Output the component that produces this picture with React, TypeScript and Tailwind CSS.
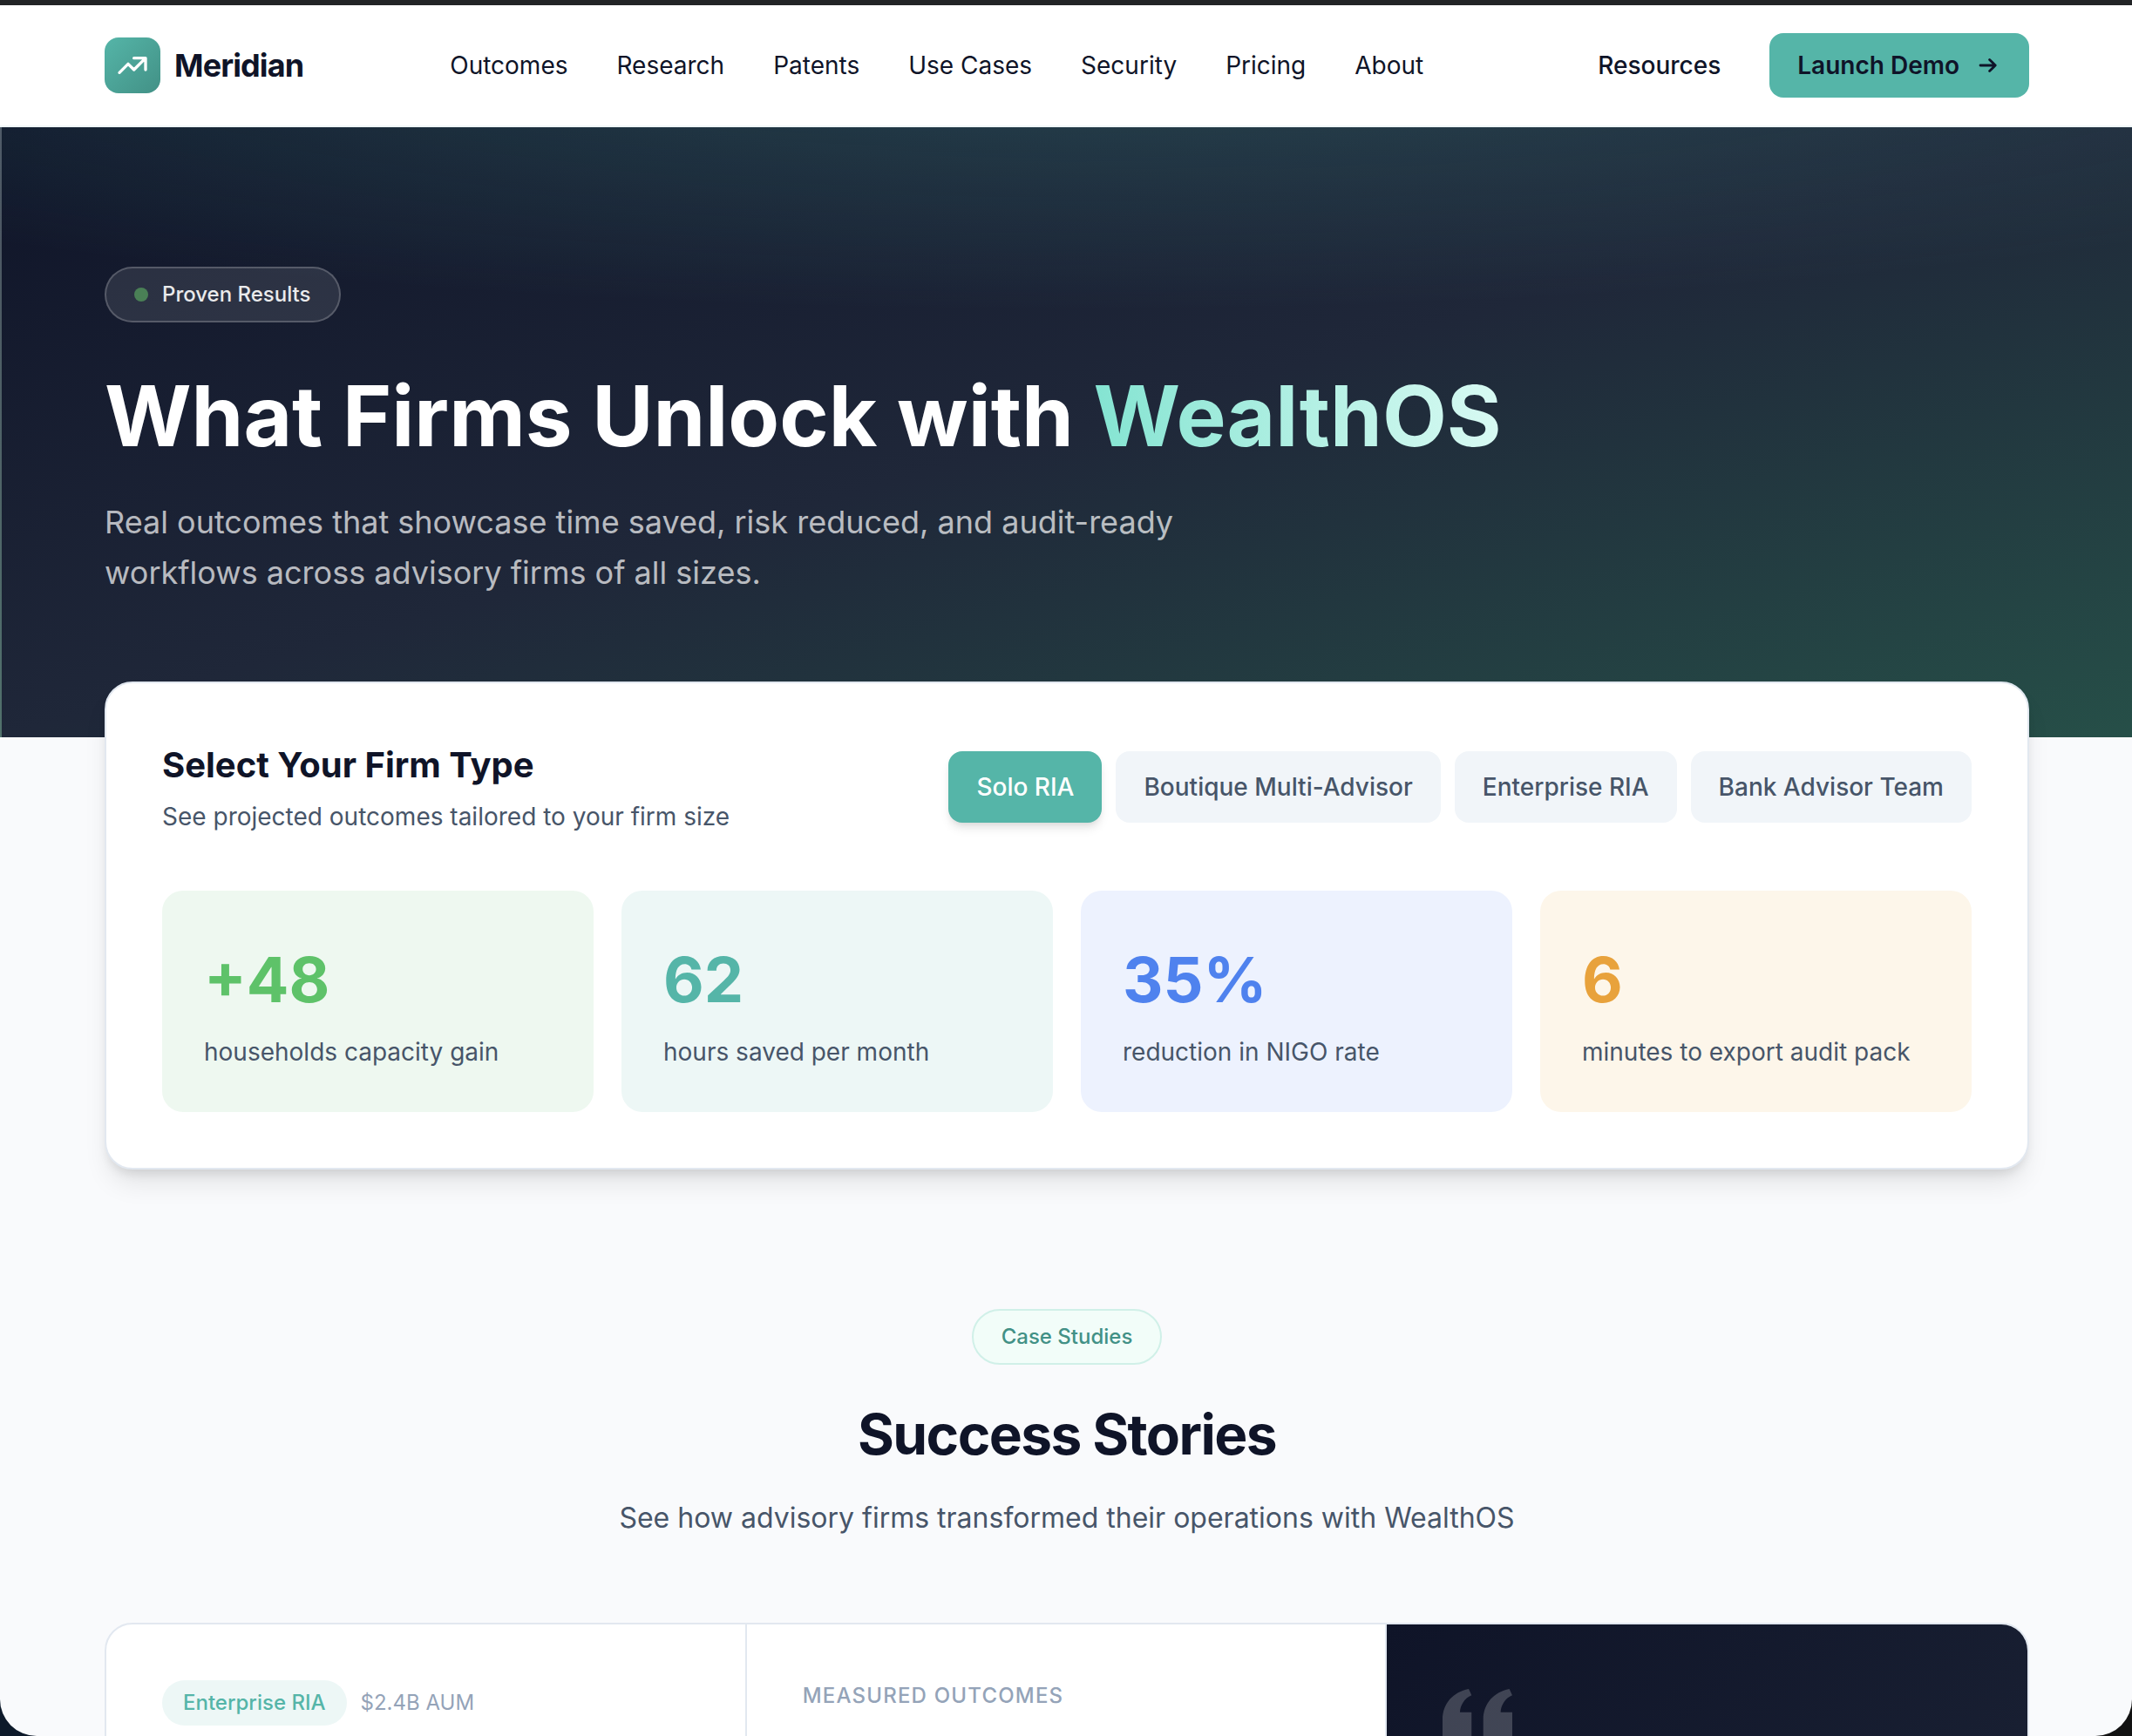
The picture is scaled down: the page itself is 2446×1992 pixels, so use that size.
import React, { useState } from "react";

const navLinks = ["Outcomes", "Research", "Patents", "Use Cases", "Security", "Pricing", "About"];

const firmTypes = ["Solo RIA", "Boutique Multi-Advisor", "Enterprise RIA", "Bank Advisor Team"];

const metrics = [
  { value: "+48", label: "households capacity gain", tile: "bg-[#eef8f0]", text: "text-[#5ec269]" },
  { value: "62", label: "hours saved per month", tile: "bg-[#edf7f6]", text: "text-[#55b5a8]" },
  { value: "35%", label: "reduction in NIGO rate", tile: "bg-[#edf2fe]", text: "text-[#4f82ee]" },
  { value: "6", label: "minutes to export audit pack", tile: "bg-[#fdf6ea]", text: "text-[#e8a23c]" },
];

function TrendIcon() {
  return (
    <svg viewBox="0 0 24 24" className="size-10" fill="none" stroke="currentColor" strokeWidth="2" strokeLinecap="round" strokeLinejoin="round" aria-hidden="true">
      <path d="M13 7h8m0 0v8m0-8l-8 8-4-4-6 6" />
    </svg>
  );
}

function ArrowIcon() {
  return (
    <svg viewBox="0 0 16 16" className="size-8" fill="none" stroke="currentColor" strokeWidth="1.4" strokeLinecap="round" strokeLinejoin="round" aria-hidden="true">
      <path d="M4 8h8.6M9.3 4.7 12.6 8 9.3 11.3" />
    </svg>
  );
}

function QuoteIcon() {
  return (
    <svg viewBox="0 0 24 24" className="size-20" fill="currentColor" aria-hidden="true">
      <path d="M14.017 21v-7.391c0-5.704 3.731-9.57 8.983-10.609l.995 2.151c-2.432.917-3.995 3.638-3.995 5.849h4v10h-9.983zm-14.017 0v-7.391c0-5.704 3.748-9.57 9-10.609l.996 2.151c-2.433.917-3.996 3.638-3.996 5.849h3.983v10h-9.983z" />
    </svg>
  );
}

function Header() {
  return (
    <header className="flex h-[140px] items-center justify-between border-b-2 border-[#eff6f8] bg-white pr-[118px] pl-[120px]">
      <a href="#" className="flex items-center gap-4">
        <span className="flex size-16 items-center justify-center rounded-2xl bg-linear-to-br from-[#55b5a8] to-[#429186] text-white">
          <TrendIcon />
        </span>
        <span className="text-[36px] leading-[54px] font-bold tracking-tight">Meridian</span>
      </a>
      <nav className="flex items-center gap-14 text-[28px] leading-[44px]">
        {navLinks.map((label) => (
          <a key={label} href="#">{label}</a>
        ))}
      </nav>
      <div className="flex items-center gap-6 text-[28px] leading-[44px]">
        <button type="button" className="px-8 font-medium">Resources</button>
        <button type="button" className="flex items-center gap-4 rounded-2xl bg-[#55b5a8] px-8 py-[15px] font-semibold">
          Launch Demo
          <ArrowIcon />
        </button>
      </div>
    </header>
  );
}

function Hero() {
  return (
    <section className="border-l-2 border-white/20 bg-[radial-gradient(ellipse_80%_50%_at_50%_-20%,rgba(85,181,168,0.3),transparent),linear-gradient(to_bottom_right,#0f1428_0%,#1f2739_50%,#264f48_100%)] px-[118px] py-40">
      <p className="inline-flex items-center gap-4 rounded-full border-2 border-white/20 bg-white/10 px-8 py-3 text-[24px] leading-[36px] font-medium text-white/90">
        <span className="size-4 rounded-full bg-[#4a8056]" />
        Proven Results
      </p>
      <h1 className="mt-12 text-[96px] leading-[118px] font-bold text-white">
        What Firms Unlock with{" "}
        <span className="bg-linear-to-r from-[#84e4d2] to-[#d8faf3] bg-clip-text text-transparent">WealthOS</span>
      </h1>
      <p className="mt-[34px] max-w-[1344px] text-[36px] leading-[58px] text-white/70">
        Real outcomes that showcase time saved, risk reduced, and audit-ready workflows across advisory firms of all sizes.
      </p>
    </section>
  );
}

function FirmSelector() {
  const [selected, setSelected] = useState(firmTypes[0]);
  return (
    <section className="relative -mt-16 rounded-[32px] border-2 border-[#e2e8f0] bg-white p-16 shadow-[0_20px_30px_-6px_rgba(0,0,0,0.1),0_8px_12px_-4px_rgba(0,0,0,0.1)]">
      <div className="flex items-center justify-between">
        <div>
          <h2 className="text-[40px] leading-[60px] font-bold">Select Your Firm Type</h2>
          <p className="mt-2 text-[28px] leading-[42px] text-[#475569]">See projected outcomes tailored to your firm size</p>
        </div>
        <div className="flex gap-4">
          {firmTypes.map((type) => (
            <button
              key={type}
              type="button"
              aria-pressed={type === selected}
              onClick={() => setSelected(type)}
              className={
                type === selected
                  ? "rounded-2xl bg-[#55b5a8] px-8 py-[19px] text-[28px] leading-[44px] font-medium text-white shadow-[0_8px_12px_-2px_rgba(0,0,0,0.1),0_4px_8px_-4px_rgba(0,0,0,0.1)]"
                  : "rounded-2xl bg-[#f1f5f9] px-8 py-[19px] text-[28px] leading-[44px] font-medium text-[#475569]"
              }
            >
              {type}
            </button>
          ))}
        </div>
      </div>
      <div className="mt-16 grid grid-cols-4 gap-8">
        {metrics.map((m) => (
          <div key={m.label} className={`rounded-3xl p-12 ${m.tile}`}>
            <p className={`text-[72px] leading-[108px] font-bold ${m.text}`}>{m.value}</p>
            <p className="mt-2 text-[28px] leading-[42px] text-[#475569]">{m.label}</p>
          </div>
        ))}
      </div>
    </section>
  );
}

function Stories() {
  return (
    <section className="pt-40">
      <div className="flex flex-col items-center text-center">
        <p className="rounded-full border-2 border-[#d0f0e8] bg-[#f2fdf9] px-8 py-3 text-[24px] leading-[36px] font-medium text-[#429186]">Case Studies</p>
        <h2 className="mt-8 text-[64px] leading-[96px] font-bold tracking-tight">Success Stories</h2>
        <p className="mt-6 text-[32px] leading-[48px] text-[#475569]">See how advisory firms transformed their operations with WealthOS</p>
      </div>
      <article className="mt-24 grid min-h-[720px] grid-cols-3 overflow-hidden rounded-[32px] border-2 border-[#e2e8f0] bg-white text-[24px] leading-[36px]">
        <div className="flex items-start gap-4 border-r-2 border-[#e2e8f0] p-16">
          <span className="rounded-full bg-[#edf7f6] px-6 py-2 font-medium text-[#55b5a8]">Enterprise RIA</span>
          <span className="py-2 text-[#94a3b8]">$2.4B AUM</span>
        </div>
        <div className="border-r-2 border-[#e2e8f0] p-16">
          <h3 className="font-medium tracking-wider text-[#94a3b8] uppercase">Measured Outcomes</h3>
        </div>
        <div className="bg-linear-to-br from-[#0f1428] to-[#1f2739] p-16 text-white/20">
          <QuoteIcon />
        </div>
      </article>
    </section>
  );
}

export default function App() {
  return (
    <div className="h-screen overflow-hidden bg-linear-to-r from-[#0d1a2a] to-[#121212] font-['Inter',sans-serif] text-[#0f1428]">
      <div className="h-full overflow-hidden rounded-b-[42px] border-t-[6px] border-[#222426] bg-[#f9fafc]">
        <Header />
        <Hero />
        <main className="pr-[118px] pl-[120px]">
          <FirmSelector />
          <Stories />
        </main>
      </div>
    </div>
  );
}
